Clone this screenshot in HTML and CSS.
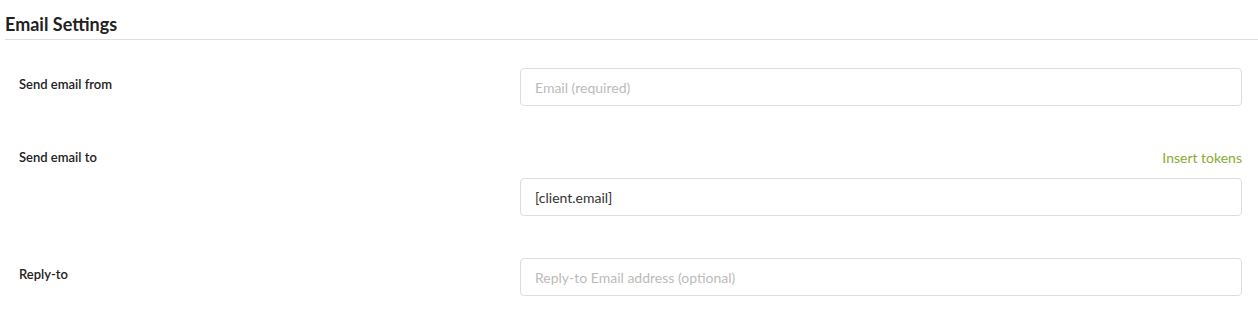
FILE: index.html
```html
<!DOCTYPE html>
<html lang="en">
<head>
    <meta charset="UTF-8">
    <title>Email Settings</title>
    <link rel="stylesheet" href="styles.css">
</head>
<body>
    <div class="settings">
        <h2 class="settings-title">Email Settings</h2>
        <div class="form">
            <div class="form-row">
                <label class="form-label">Send email from</label>
                <div class="form-field">
                    <input class="form-input" type="text" placeholder="Email (required)">
                </div>
            </div>
            <div class="form-row row-to">
                <label class="form-label">Send email to</label>
                <div class="form-field">
                    <div class="field-tools"><a href="#" class="tokens-link">Insert tokens</a></div>
                    <input class="form-input" type="text" value="[client.email]">
                </div>
            </div>
            <div class="form-row">
                <label class="form-label">Reply-to</label>
                <div class="form-field">
                    <input class="form-input" type="text" placeholder="Reply-to Email address (optional)">
                </div>
            </div>
        </div>
    </div>
</body>
</html>
```
FILE: styles.css
```css
* {
    margin: 0;
    padding: 0;
    box-sizing: border-box;
}
body {
    font-family: Lato, "Open Sans", sans-serif;
    color: #222;
    background: #fff;
}
.settings {
    width: 1258px;
}
.settings-title {
    margin-left: 5px;
    padding: 13px 0 4px;
    font-size: 18px;
    line-height: 22px;
    font-weight: 700;
    color: #222;
    border-bottom: 1px solid #ddd;
}
.form {
    padding: 28px 16px 0 19px;
}
.form-row {
    display: flex;
    align-items: flex-start;
    margin-bottom: 36px;
}
.form-row.row-to {
    margin-bottom: 42px;
}
.form-label {
    width: 501px;
    flex-shrink: 0;
    padding-top: 8px;
    font-size: 13px;
    line-height: 16px;
    font-weight: 600;
    color: #222;
}
.row-to .form-label {
    padding-top: 7px;
}
.form-field {
    flex: 1;
}
.field-tools {
    display: flex;
    justify-content: flex-end;
    padding-top: 8px;
    margin-bottom: 12px;
}
.tokens-link {
    font-size: 14px;
    line-height: 16px;
    color: #8aab2f;
    text-decoration: none;
}
.form-input {
    display: block;
    width: 100%;
    height: 38px;
    padding: 0 14px;
    border: 1px solid #ddd;
    border-radius: 4px;
    font-family: Lato, "Open Sans", sans-serif;
    font-size: 14px;
    color: #333;
    background: #fff;
    outline: none;
}
.form-input::placeholder {
    color: #bbb;
}
```
